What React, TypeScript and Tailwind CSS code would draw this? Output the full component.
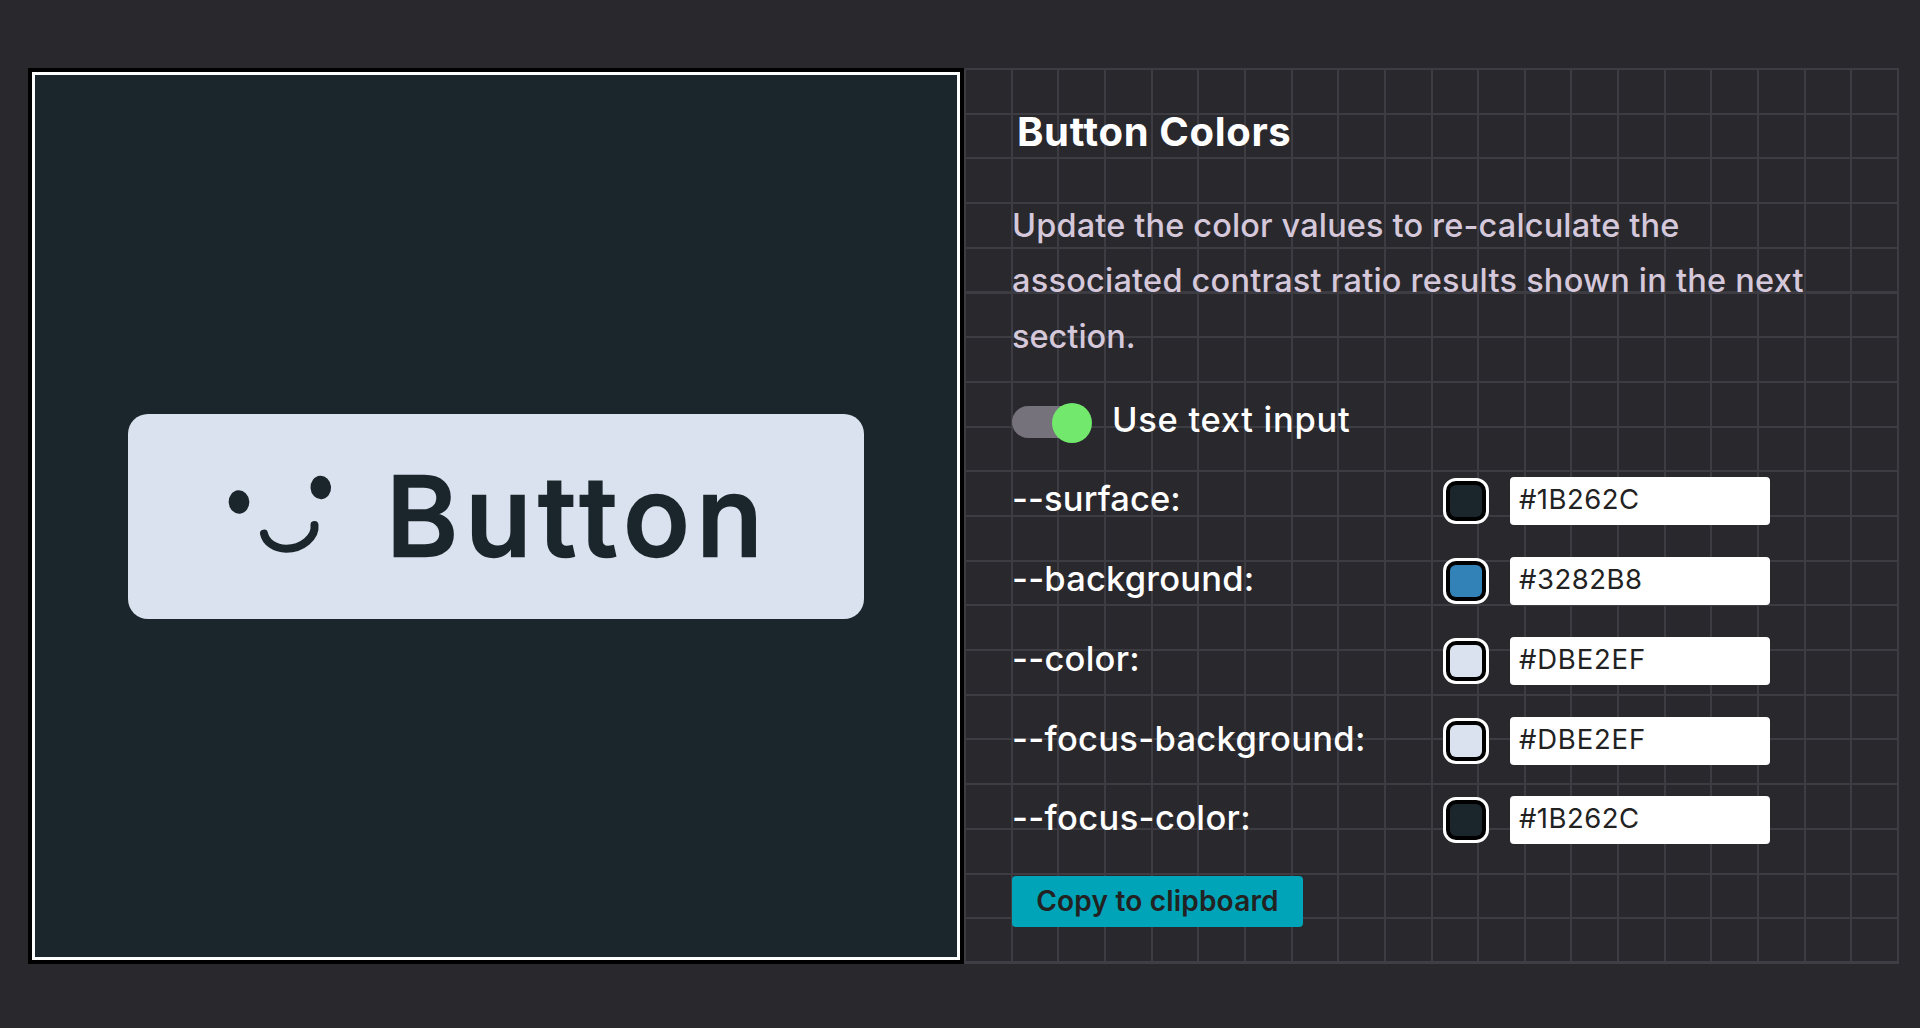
import React from 'react';

type ColorField = { name: string; value: string; swatch: string; tracking: string; valueTracking: string };

const fields: ColorField[] = [
  { name: '--surface:', value: '#1B262C', swatch: 'bg-[#1b262c]', tracking: 'tracking-[0.1px]', valueTracking: 'tracking-[0.45px]' },
  { name: '--background:', value: '#3282B8', swatch: 'bg-[#3282b8]', tracking: 'tracking-[0.2px]', valueTracking: 'tracking-[0.5px]' },
  { name: '--color:', value: '#DBE2EF', swatch: 'bg-[#dbe2ef]', tracking: 'tracking-[0.25px]', valueTracking: 'tracking-[0.8px]' },
  { name: '--focus-background:', value: '#DBE2EF', swatch: 'bg-[#dbe2ef]', tracking: 'tracking-[0.3px]', valueTracking: 'tracking-[0.8px]' },
  { name: '--focus-color:', value: '#1B262C', swatch: 'bg-[#1b262c]', tracking: 'tracking-[0.35px]', valueTracking: 'tracking-[0.45px]' },
];

function Face() {
  return (
    <svg className="mb-[3px] h-[80px] w-[104px] shrink-0" viewBox="0 0 104 80" fill="currentColor" aria-hidden="true">
      <ellipse cx="11" cy="27" rx="10.3" ry="11.7" transform="rotate(-4 11 27)" />
      <ellipse cx="92.8" cy="12.5" rx="10.3" ry="11.7" transform="rotate(-4 92.8 12.5)" />
      <path
        d="M36 58.6C37.8 67 46.5 73.7 58.3 73.7C73.5 73.7 88 62.5 86.5 50"
        fill="none"
        stroke="currentColor"
        strokeWidth="8"
        strokeLinecap="round"
      />
    </svg>
  );
}

function Preview() {
  return (
    <section className="flex h-[896px] w-[936px] shrink-0 items-center justify-center border-4 border-black bg-[#1b262c] inset-ring-[3px] inset-ring-white">
      <button className="flex h-[205px] w-[736px] items-center rounded-[20px] bg-[#dbe2ef] pl-[100px] text-[#1b262c]">
        <Face />
        <span className="ml-[54px] whitespace-nowrap text-[110px] leading-[203px] font-medium tracking-[7px] [-webkit-text-stroke:2.5px_currentColor] [stroke-linejoin:round]">
          Button
        </span>
      </button>
    </section>
  );
}

function Toggle() {
  return (
    <div className="mt-[39px] flex h-10 items-start">
      <span className="flex h-[38px] w-20 items-center">
        <span className="flex h-8 w-[75px] items-center rounded-full bg-[#76727c]">
          <span className="mt-[2px] ml-10 size-10 shrink-0 rounded-full bg-[#72e96c]" />
        </span>
      </span>
      <span className="ml-[20px] whitespace-nowrap text-[34.5px] leading-[33px] font-medium tracking-[0.7px] text-white">
        Use text input
      </span>
    </div>
  );
}

function Field({ field }: { field: ColorField }) {
  return (
    <div className="flex h-12 items-center">
      <span className={`w-[431px] self-start whitespace-nowrap text-[34.5px] leading-[43px] font-medium text-white ${field.tracking}`}>
        {field.name}
      </span>
      <span className="flex size-[46px] items-center justify-center rounded-[13px] border-[3px] border-white bg-black">
        <span className={`size-8 rounded-[6px] ${field.swatch}`} />
      </span>
      <span className={`ml-[21px] h-12 w-[260px] rounded-[4px] bg-white pl-[9px] text-[27.5px] leading-[45px] text-[#222] ${field.valueTracking}`}>
        {field.value}
      </span>
    </div>
  );
}

export default function App() {
  return (
    <main className="flex h-[1028px] w-[1920px] overflow-hidden bg-[#29282d] pt-[68px] pl-[28px] font-['Inter',sans-serif]">
      <Preview />
      <section className="flex h-[896px] w-[935px] flex-col items-start border-b-[3px] border-[#3f3e47] bg-[repeating-linear-gradient(to_right,#3d3c43_0_2px,transparent_2px_46.65px),repeating-linear-gradient(to_bottom,#3d3c43_0_2px,transparent_2px_44.7px)] pt-[36px] pl-[48px]">
        <h1 className="ml-[5px] h-14 whitespace-nowrap text-[40px] leading-[56px] font-bold tracking-[0.65px] text-white">
          Button Colors
        </h1>
        <p className="mt-[38px] whitespace-nowrap text-[32.5px] leading-[55.3px] font-medium text-[#d5c8db]">
          <span className="tracking-[0.15px]">Update the color values to re-calculate the</span>
          <br />
          <span className="tracking-[0.23px]">associated contrast ratio results shown in the next</span>
          <br />
          section.
        </p>
        <Toggle />
        <div className="mt-[34.4px] flex flex-col gap-[31.8px]">
          {fields.map((field) => (
            <Field key={field.name} field={field} />
          ))}
        </div>
        <button className="mt-[31.5px] h-[51px] w-[291px] rounded-[4px] bg-[#00a4b8] text-[28px] font-semibold tracking-[0.2px] whitespace-nowrap text-[#222]">
          Copy to clipboard
        </button>
      </section>
    </main>
  );
}
